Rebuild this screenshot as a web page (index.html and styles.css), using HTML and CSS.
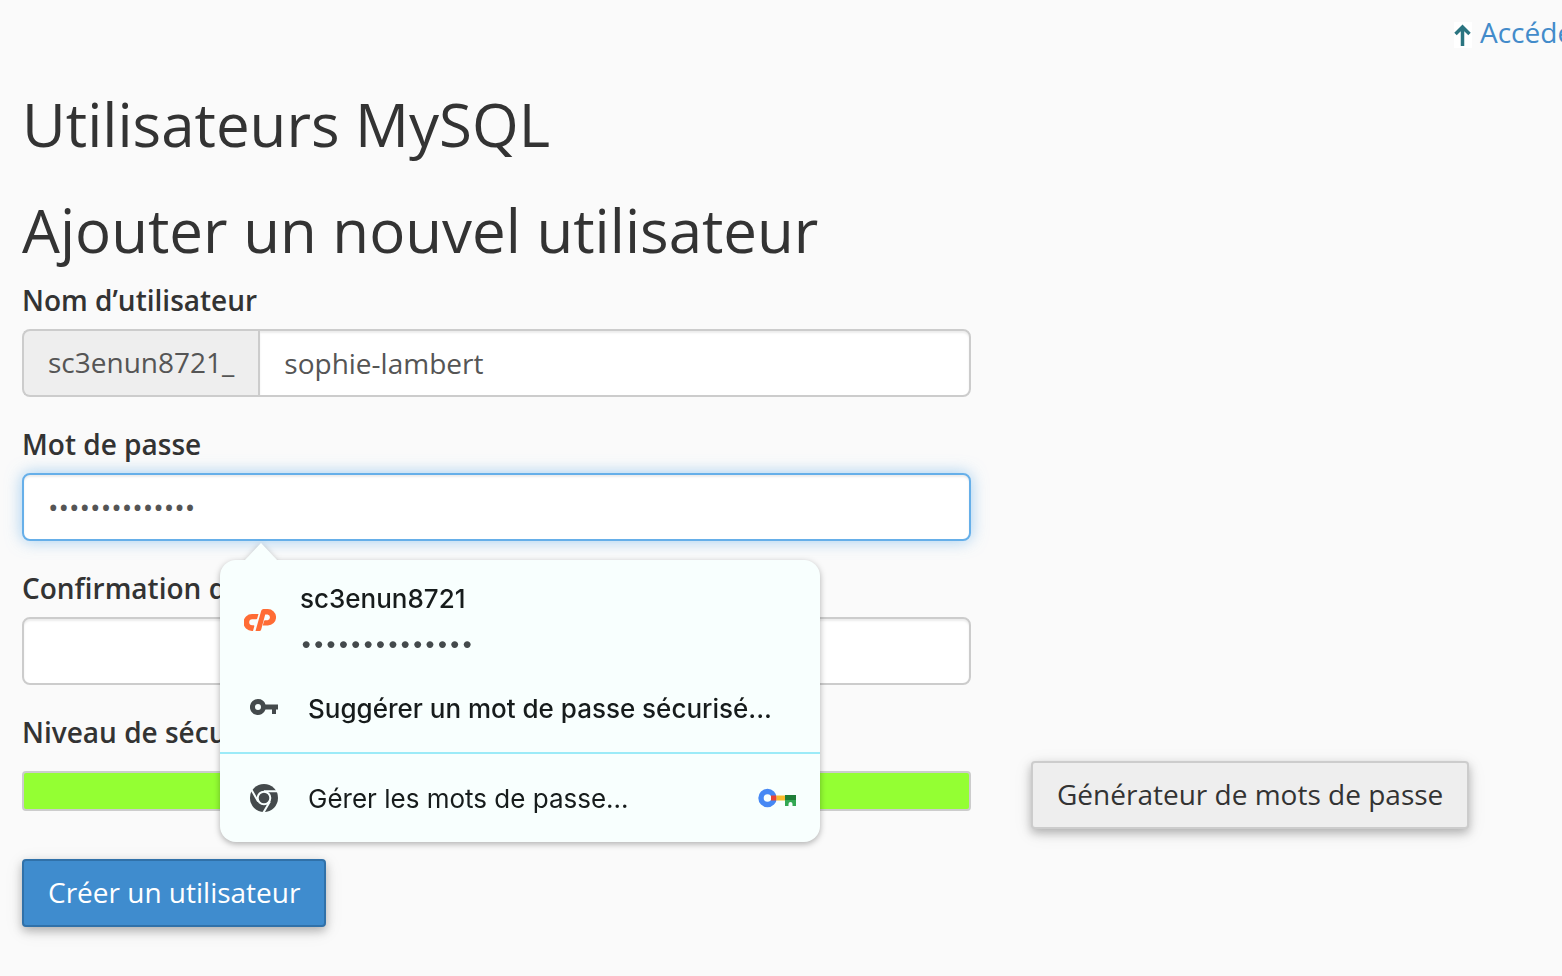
FILE: index.html
```html
<!DOCTYPE html>
<html lang="fr">
<head>
<meta charset="utf-8">
<title>Utilisateurs MySQL</title>
<link rel="stylesheet" href="styles.css">
</head>
<body>
<nav class="topbar">
  <a class="jump" href="#">
    <svg class="jump-icon" width="18" height="26" viewBox="0 0 18 26" aria-hidden="true"><rect width="18" height="26" fill="#fff"/><path d="M8.500 24V6M1.500 12L8.500 5l7 7" fill="none" stroke="#2a7480" stroke-width="3.500"/></svg>
    <span>Accéder</span>
  </a>
</nav>
<main class="page">
  <h1 class="title">Utilisateurs MySQL</h1>
  <h2 class="title">Ajouter un nouvel utilisateur</h2>
  <form class="form">
    <div class="group">
      <label class="label" for="user">Nom d’utilisateur</label>
      <div class="input-group">
        <span class="addon">sc3enun8721_</span>
        <input class="input" id="user" type="text" value="sophie-lambert">
      </div>
    </div>
    <div class="group anchor">
      <label class="label" for="pass">Mot de passe</label>
      <input class="input active" id="pass" type="password" value="abcdefghijklmn">
      <div class="popup">
        <button class="entry account" type="button">
          <svg class="cp" width="32" height="22" viewBox="0 0 32 22" aria-hidden="true"><g fill="#ff6c35"><path d="M8 5h6.500l-1.300 4.500a1 1 0 0 1-1 .8H8.200a3 3 0 0 0 0 6h1.300a.8.8 0 0 1 .8 1L9 22H8A8.500 8.500 0 0 1 8 5z"/><path d="M17.200 1.800Q17.700 0 19.500 0h4.300a8.200 8.200 0 0 1 0 16.500h-5l1.200-4.400q.3-.9 1.300-.9h2.300a2.900 2.900 0 0 0 0-5.700h-2.400L17.200 20.500Q16.800 22 15.300 22H11.500z"/></g></svg>
          <span class="account-text"><span>sc3enun8721</span><span class="dots">••••••••••••••</span></span>
        </button>
        <button class="entry strong" type="button">
          <svg class="icon" width="28" height="28" viewBox="0 0 28 28" aria-hidden="true"><path fill="#444a4c" fill-rule="evenodd" d="M8 5a8 8 0 1 0 7.500 10.500H22v4.500h4V15.500h2v-5H15.500A8 8 0 0 0 8 5zM8 10a3 3 0 1 1 0 6 3 3 0 0 1 0-6z"/></svg>
          <span class="entry-text">Suggérer un mot de passe sécurisé...</span>
        </button>
        <button class="entry manage" type="button">
          <svg class="icon" width="28" height="28" viewBox="0 0 28 28" aria-hidden="true"><circle cx="14" cy="14" r="14" fill="#444a4c"/><g fill="none" stroke="#f8fffe" stroke-width="2"><circle cx="14" cy="14" r="6.300"/><path d="M14 7.200H27M8.100 17.400L1.600 6.100M19.900 17.400L13.400 28.600"/></g></svg>
          <span class="entry-text">Gérer les mots de passe...</span>
          <svg class="manager-key" width="38" height="20" viewBox="0 0 38 20" aria-hidden="true"><circle cx="9.500" cy="10" r="6.500" fill="none" stroke="#4688f4" stroke-width="5.400"/><path d="M13 7.500h5.500v5H13z" fill="#e84335"/><path d="M18.500 7.500H27v5h-8.500z" fill="#fbbc2c"/><path d="M27 7h11v6H27z" fill="#1e7e37"/><path d="M27 12h11v6h-3.500v-2a2 2 0 0 0-4 0v2H27z" fill="#34a853"/></svg>
        </button>
      </div>
    </div>
    <div class="group">
      <label class="label" for="confirm">Confirmation du mot de passe</label>
      <input class="input" id="confirm" type="password">
    </div>
    <div class="group">
      <span class="label" id="level">Niveau de sécurité</span>
      <div class="strength">
        <div class="meter" role="img" aria-labelledby="level"></div>
        <button class="button" type="button">Générateur de mots de passe</button>
      </div>
    </div>
    <button class="button primary" type="submit">Créer un utilisateur</button>
  </form>
</main>
</body>
</html>
```
FILE: styles.css
```css
* { box-sizing: border-box; }

body {
  margin: 0;
  background: #fafafa;
  color: #333;
  font-family: "Open Sans", "Noto Sans", sans-serif;
  font-size: 28px;
  line-height: 40px;
  overflow-x: hidden;
}

.topbar {
  padding: 12px 0 0 calc(100% - 108px);
  overflow: hidden;
}

.jump {
  display: flex;
  align-items: center;
  gap: 8px;
  color: #428bca;
  text-decoration: none;
  white-space: nowrap;
}

.jump-icon { flex: none; margin-top: 6px; }

.page { padding: 39px 22px; }

.title {
  margin: 0 0 40px;
  font-size: 60px;
  font-weight: 400;
  line-height: 66px;
}

.title + .title { margin-bottom: 18px; }

.group { margin-bottom: 28px; max-width: 949px; }

.label {
  display: block;
  margin-bottom: 10px;
  font-weight: 600;
  line-height: 38px;
}

.input {
  display: block;
  width: 100%;
  height: 68px;
  padding: 0 24px;
  border: 2px solid #ccc;
  border-radius: 8px;
  background: #fff;
  box-shadow: inset 0 2px 2px rgba(0, 0, 0, .075);
  color: #555;
  font: inherit;
  outline: 0;
}

.active {
  border-color: #66afe9;
  box-shadow: inset 0 2px 2px rgba(0, 0, 0, .075), 0 0 16px rgba(102, 175, 233, .6);
}

.input-group { display: flex; }

.addon {
  padding: 11px 24px 13px;
  border: 2px solid #ccc;
  border-right: 0;
  border-radius: 8px 0 0 8px;
  background: #eee;
  color: #555;
}

.input-group .input {
  flex: 1;
  min-width: 0;
  border-radius: 0 8px 8px 0;
}

.anchor { position: relative; }

.popup {
  position: absolute;
  z-index: 2;
  top: 135px;
  left: 198px;
  width: 600px;
  border-radius: 16px;
  background: #f8fffe;
  filter: drop-shadow(0 2px 3px rgba(0, 0, 0, .3));
  font-family: Inter, sans-serif;
}

.popup::before {
  content: "";
  position: absolute;
  top: -17px;
  left: 24px;
  width: 34px;
  height: 18px;
  background: #f8fffe;
  clip-path: polygon(50% 0, 100% 100%, 0 100%);
}

.entry {
  display: flex;
  align-items: center;
  width: 100%;
  height: 88px;
  padding: 0 24px 0 30px;
  border: 0;
  background: none;
  color: #171c1c;
  font: inherit;
  font-size: 26px;
  text-align: left;
  gap: 30px;
}

.entry-text,
.account-text { padding-top: 2px; }

.account {
  height: 104px;
  padding: 16px 24px 0;
  gap: 24px;
  font-weight: 500;
}

.account-text { display: flex; flex-direction: column; gap: 4px; }

.dots { color: #444a4c; font-size: 22px; font-weight: 400; }

.strong { font-weight: 500; }

.manage { height: 90px; border-top: 2px solid #9cebf8; }

.icon { flex: none; }

.manager-key { margin-left: auto; }

.strength {
  display: flex;
  align-items: flex-start;
  gap: 60px;
  margin-bottom: 30px;
}

.meter {
  flex: none;
  width: 100%;
  height: 40px;
  margin-top: 10px;
  border: 2px solid #ccc;
  border-radius: 4px;
  background: #94ff33;
}

.button {
  flex: none;
  padding: 11px 24px 13px;
  border: 2px solid #ccc;
  border-radius: 4px;
  background: #eee;
  box-shadow: 0 4px 10px rgba(0, 0, 0, .26), 0 4px 20px rgba(0, 0, 0, .08);
  color: #333;
  font: inherit;
}

.primary {
  border-color: #3071a9;
  background: #3f8cce;
  color: #fff;
}
```
